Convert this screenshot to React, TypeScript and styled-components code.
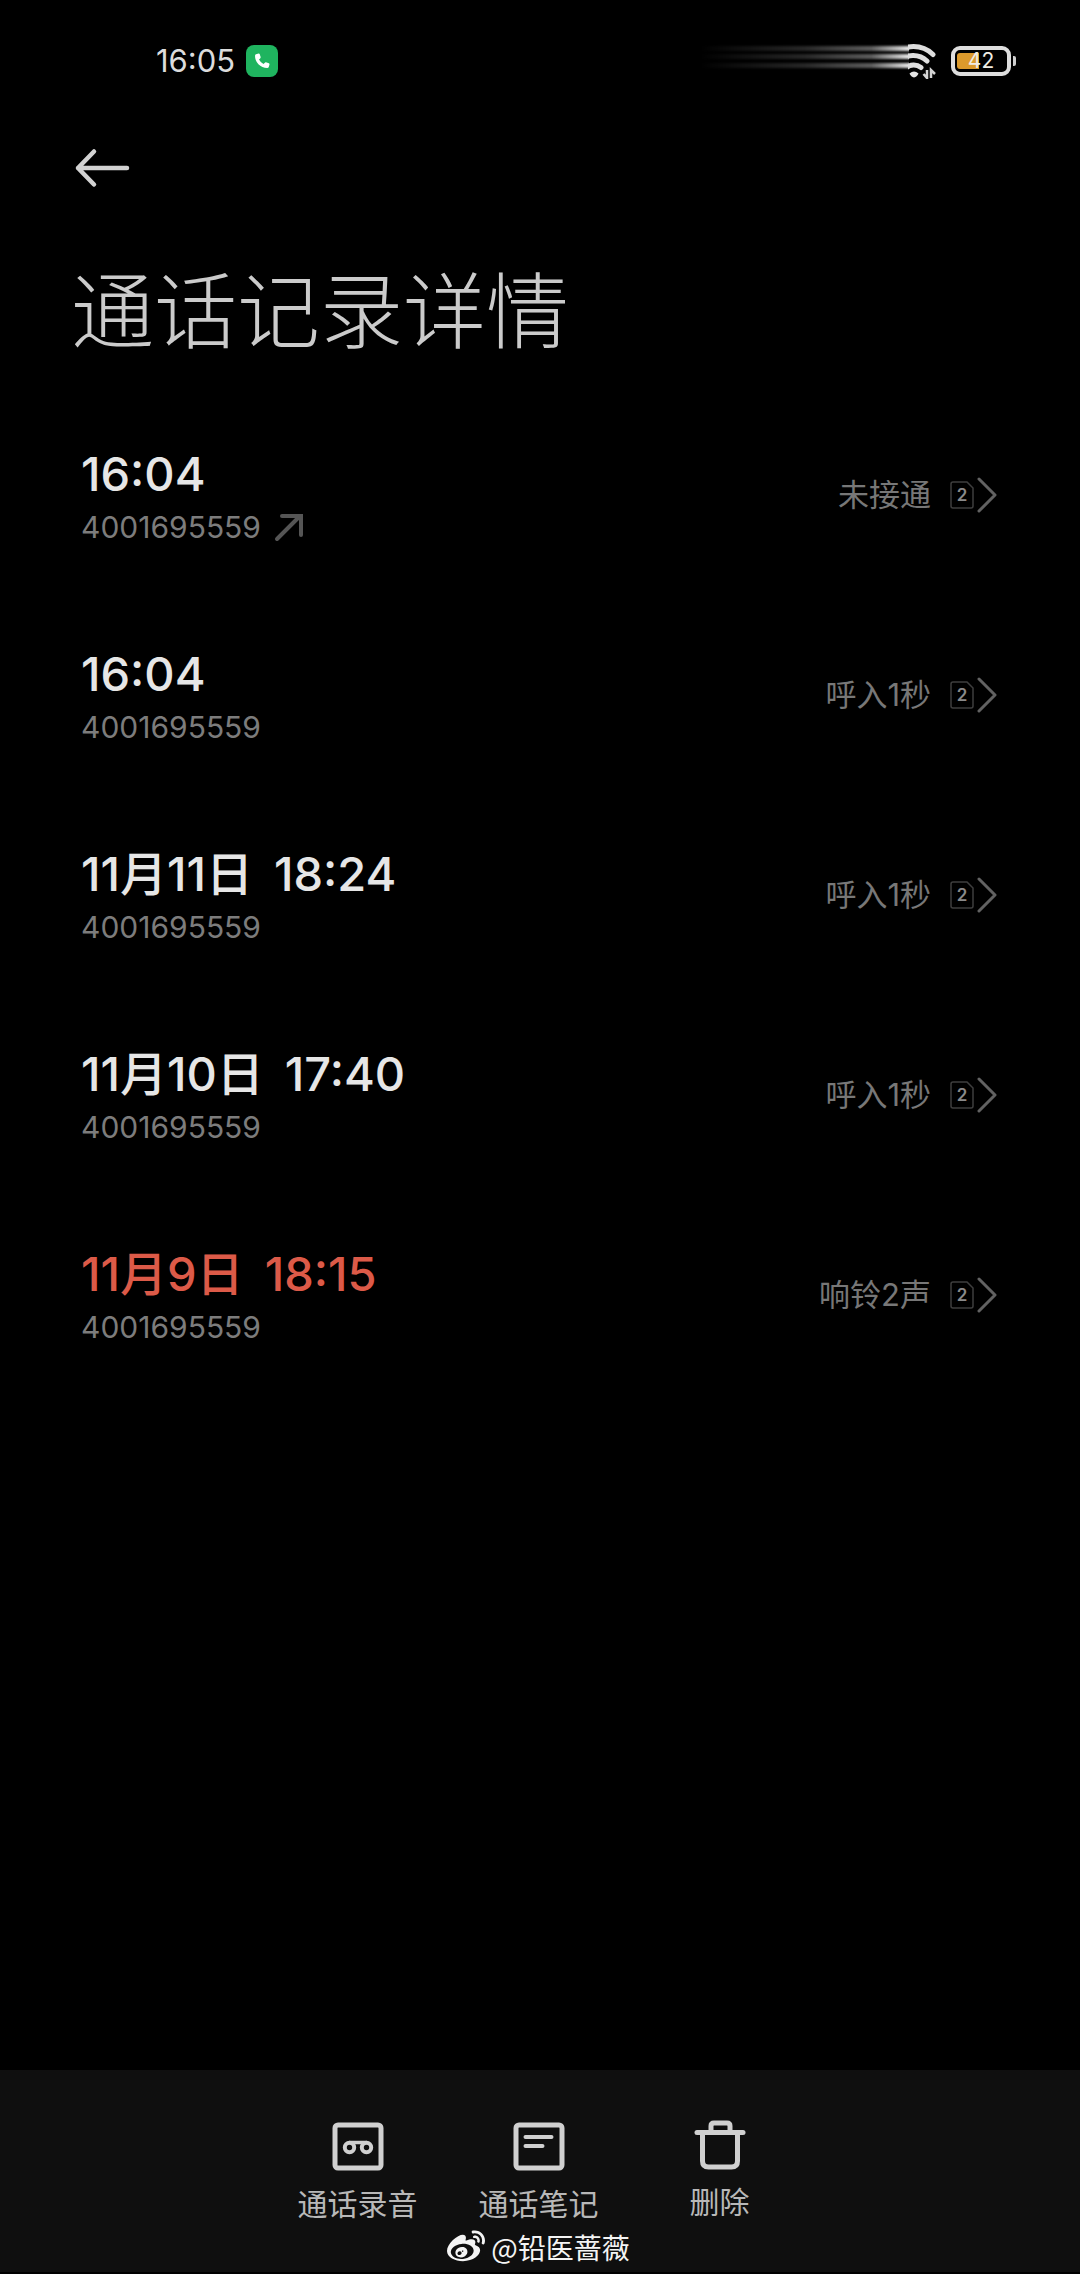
import React from "react";
import styled, { createGlobalStyle } from "styled-components";
import { FaWeibo } from "react-icons/fa";

const GlobalStyle = createGlobalStyle`
  * { box-sizing: border-box; }
  body {
    margin: 0;
    background: #000;
    color: #e6e6e6;
    font-family: Inter, "Noto Sans CJK SC", sans-serif;
  }
  h1, p, ul { margin: 0; padding: 0; }
  button { border: 0; padding: 0; background: none; color: inherit; font: inherit; cursor: pointer; }
`;

const Screen = styled.div`
  min-height: 100vh;
  display: flex;
  flex-direction: column;
  padding-bottom: 2px;
`;

const StatusBar = styled.header`
  display: flex;
  align-items: center;
  justify-content: space-between;
  height: 122px;
  padding: 0 64px 0 156px;
`;

const StatusGroup = styled.div<{ $gap: number }>`
  display: flex;
  align-items: center;
  gap: ${(p) => p.$gap}px;
`;

const Clock = styled.time`
  font-size: 31px;
  line-height: 40px;
  color: #dcdcdc;
`;

const CallBadge = styled.span`
  display: grid;
  place-items: center;
  width: 32px;
  height: 32px;
  border-radius: 8px;
  background: #1fb45f;
`;

const BatteryWrap = styled.div`
  display: flex;
  align-items: center;
  gap: 2px;
`;

const BatteryBody = styled.div`
  display: flex;
  width: 60px;
  height: 30px;
  padding: 3px 2px;
  border: 4px solid #dedede;
  border-radius: 9px;
`;

const BatteryLevel = styled.span<{ $percent: number }>`
  flex: 1;
  border-radius: 3px;
  background: linear-gradient(to right, #dc9a2c ${(p) => p.$percent}%, transparent ${(p) => p.$percent}%);
  color: #f0ece4;
  font-size: 21px;
  line-height: 16px;
  text-align: center;
`;

const BatteryTip = styled.span`
  width: 3px;
  height: 10px;
  border-radius: 0 2px 2px 0;
  background: #cfcfcf;
`;

const Heading = styled.div`
  display: flex;
  flex-direction: column;
  align-items: flex-start;
  gap: 62px;
  padding: 22px 71px 37px;
`;

const BackButton = styled.button`
  display: flex;
  height: 48px;
  align-items: center;
`;

const Title = styled.h1`
  font-size: 83px;
  line-height: 104px;
  font-weight: 300;
  font-family: "Noto Sans CJK SC", sans-serif;
  color: #cbcbcb;
`;

const CallList = styled.ul`
  list-style: none;
  flex: 1;
`;

const CallRow = styled.li`
  display: flex;
  align-items: center;
  justify-content: space-between;
  height: 200px;
  padding: 0 82px 0 81px;
`;

const CallInfo = styled.div`
  display: flex;
  flex-direction: column;
  gap: 5px;
  padding-top: 3px;
`;

const CallTime = styled.time<{ $missed?: boolean }>`
  display: flex;
  gap: 21px;
  font-size: 47px;
  line-height: 56px;
  font-weight: 500;
  color: ${(p) => (p.$missed ? "#dc5a48" : "#e6e6e6")};
`;

const CallNumber = styled.p`
  display: flex;
  align-items: center;
  gap: 13px;
  font-size: 30px;
  line-height: 40px;
  color: #7c7c7c;
`;

const DetailButton = styled.button`
  display: flex;
  align-items: center;
  color: #777;
  font-size: 31px;
  line-height: 40px;
`;

const SimCard = styled.span`
  position: relative;
  display: grid;
  place-items: center;
  width: 24px;
  height: 28px;
  margin: 0 3px 0 19px;
  font-size: 17px;
  line-height: 20px;
  font-weight: 600;
  color: #8a8a8a;

  svg { position: absolute; inset: 0; }
`;

const Toolbar = styled.footer`
  display: flex;
  flex-direction: column;
  align-items: center;
  background: #0f0f0f;
  padding: 50px 3px 4px 0;
`;

const Actions = styled.nav`
  display: flex;
  align-items: flex-start;
  height: 106px;
`;

const Action = styled.button<{ $raised?: boolean }>`
  display: flex;
  flex-direction: column;
  align-items: center;
  width: 181px;
  gap: 12px;
  padding-top: ${(p) => (p.$raised ? 0 : 2)}px;
  font-size: 30px;
  line-height: 40px;
  color: #b8b8b8;
`;

const Watermark = styled.p`
  display: flex;
  align-items: center;
  gap: 6px;
  font-family: "Noto Sans CJK SC", sans-serif;
  font-size: 28px;
  line-height: 42px;
  color: #f4f4f4;
`;

const PhoneGlyph = () => (
  <svg width="18" height="18" viewBox="0 0 24 24" fill="#fff" aria-hidden="true">
    <path d="M4 3 7.500 2q1-.2 1.400.8l1.300 4q.2.800-.4 1.400L8 10q2 4 6 6l1.800-1.800q.6-.6 1.400-.4l4 1.300q1 .4.8 1.400l-1 3.500q-.4 1.300-2 1.300Q12 21 7.200 16.300 2.600 11.600 2.700 5q0-1.600 1.300-2z" />
  </svg>
);

const WifiGlyph = () => (
  <svg width="236" height="36" viewBox="0 0 236 36" aria-hidden="true">
    <defs>
      <linearGradient id="trail" x1="0" x2="1" y1="0" y2="0">
        <stop offset="0" stopColor="#fff" stopOpacity="0" />
        <stop offset="0.5" stopColor="#fff" stopOpacity="0.15" />
        <stop offset="0.82" stopColor="#fff" stopOpacity="0.36" />
        <stop offset="1" stopColor="#fff" stopOpacity="0.9" />
      </linearGradient>
      <filter id="soft" x="-5%" y="-50%" width="110%" height="200%">
        <feGaussianBlur stdDeviation="0 1" />
      </filter>
      <clipPath id="cut"><rect x="208" y="0" width="28" height="36" /></clipPath>
    </defs>
    <g fill="url(#trail)" filter="url(#soft)">
      <rect x="0" y="3" width="209" height="5" />
      <rect x="0" y="11" width="209" height="5" />
      <rect x="0" y="20" width="209" height="5" />
    </g>
    <g clipPath="url(#cut)" fill="none" stroke="#dedede" strokeWidth="5" strokeLinecap="round">
      <path d="M194 11.500A28 28 0 0 1 233 11.500" />
      <path d="M199 18.500A20 20 0 0 1 227 18" />
      <path d="M206 25A12 12 0 0 1 221 24.500" />
    </g>
    <path d="M209.500 30.500Q214 26.500 218.500 30.500Q217 34 214 34.500Q211 34 209.500 30.500z" fill="#e4e4e4" />
    <path d="M227 27v8l-3.500-4M231 35v-8l4 4" fill="none" stroke="#d4d4d4" strokeWidth="2.500" />
  </svg>
);

const BackGlyph = () => (
  <svg width="60" height="42" viewBox="0 0 60 42" fill="none" stroke="#d2d2d2" strokeWidth="4.500" strokeLinecap="round" strokeLinejoin="round" aria-hidden="true">
    <path d="M56 21H7M23 4.500 7 21l16 16.500" />
  </svg>
);

const OutgoingGlyph = () => (
  <svg width="30" height="30" viewBox="0 0 30 30" fill="none" stroke="#555" strokeWidth="4" strokeLinecap="round" aria-hidden="true">
    <path d="M3 27 26 4M8 4h19v19" />
  </svg>
);

const SimOutline = () => (
  <svg width="24" height="28" viewBox="0 0 24 28" fill="none" stroke="#3e3e3e" strokeWidth="1.500" aria-hidden="true">
    <path d="M3 1h14l6 6v18q0 2-2 2H3q-2 0-2-2V3q0-2 2-2z" />
  </svg>
);

const ChevronGlyph = () => (
  <svg width="21" height="36" viewBox="0 0 21 36" fill="none" stroke="#626262" strokeWidth="3" strokeLinecap="round" strokeLinejoin="round" aria-hidden="true">
    <path d="M2 2 18 18 2 34" />
  </svg>
);

const iconProps = {
  width: 52,
  height: 50,
  viewBox: "0 0 52 50",
  fill: "none",
  stroke: "#d0d0d0",
  strokeWidth: 5,
  strokeLinecap: "round" as const,
  strokeLinejoin: "round" as const,
  "aria-hidden": true,
};

const RecordGlyph = () => (
  <svg {...iconProps}>
    <rect x="3" y="3" width="46" height="43" rx="3" />
    <g strokeWidth="4">
      <circle cx="17.500" cy="25.500" r="4.700" />
      <circle cx="34.500" cy="25.500" r="4.700" />
      <path d="M17.500 20.500h17" strokeWidth="3.500" />
    </g>
  </svg>
);

const NoteGlyph = () => (
  <svg {...iconProps}>
    <rect x="3" y="3" width="46" height="43" rx="3" />
    <path d="M12.500 15h26M12.500 24h17" strokeWidth="4" />
  </svg>
);

const TrashGlyph = () => (
  <svg {...iconProps}>
    <path d="M3 12.500h46" />
    <path d="M8.500 13v28q0 6 6 6h23q6 0 6-6V13" />
    <path d="M17 11V6q0-3 3-3h13q3 0 3 3v5" />
  </svg>
);

interface Call {
  date?: string;
  time: string;
  status: string;
  outgoing?: boolean;
  missed?: boolean;
}

const calls: Call[] = [
  { time: "16:04", status: "未接通", outgoing: true },
  { time: "16:04", status: "呼入1秒" },
  { date: "11月11日", time: "18:24", status: "呼入1秒" },
  { date: "11月10日", time: "17:40", status: "呼入1秒" },
  { date: "11月9日", time: "18:15", status: "响铃2声", missed: true },
];

export default function App() {
  return (
    <Screen lang="zh-CN">
      <GlobalStyle />
      <StatusBar>
        <StatusGroup $gap={11}>
          <Clock>16:05</Clock>
          <CallBadge><PhoneGlyph /></CallBadge>
        </StatusGroup>
        <StatusGroup $gap={15}>
          <WifiGlyph />
          <BatteryWrap>
            <BatteryBody><BatteryLevel $percent={46}>42</BatteryLevel></BatteryBody>
            <BatteryTip />
          </BatteryWrap>
        </StatusGroup>
      </StatusBar>
      <Heading>
        <BackButton type="button" aria-label="返回"><BackGlyph /></BackButton>
        <Title>通话记录详情</Title>
      </Heading>
      <CallList>
        {calls.map((call, i) => (
          <CallRow key={i}>
            <CallInfo>
              <CallTime $missed={call.missed}>
                {call.date && <span>{call.date}</span>}
                <span>{call.time}</span>
              </CallTime>
              <CallNumber>4001695559{call.outgoing && <OutgoingGlyph />}</CallNumber>
            </CallInfo>
            <DetailButton type="button">
              {call.status}
              <SimCard><SimOutline />2</SimCard>
              <ChevronGlyph />
            </DetailButton>
          </CallRow>
        ))}
      </CallList>
      <Toolbar>
        <Actions>
          <Action type="button"><RecordGlyph />通话录音</Action>
          <Action type="button"><NoteGlyph />通话笔记</Action>
          <Action type="button" $raised><TrashGlyph />删除</Action>
        </Actions>
        <Watermark><FaWeibo size={38} aria-hidden="true" />@铅医蔷薇</Watermark>
      </Toolbar>
    </Screen>
  );
}
